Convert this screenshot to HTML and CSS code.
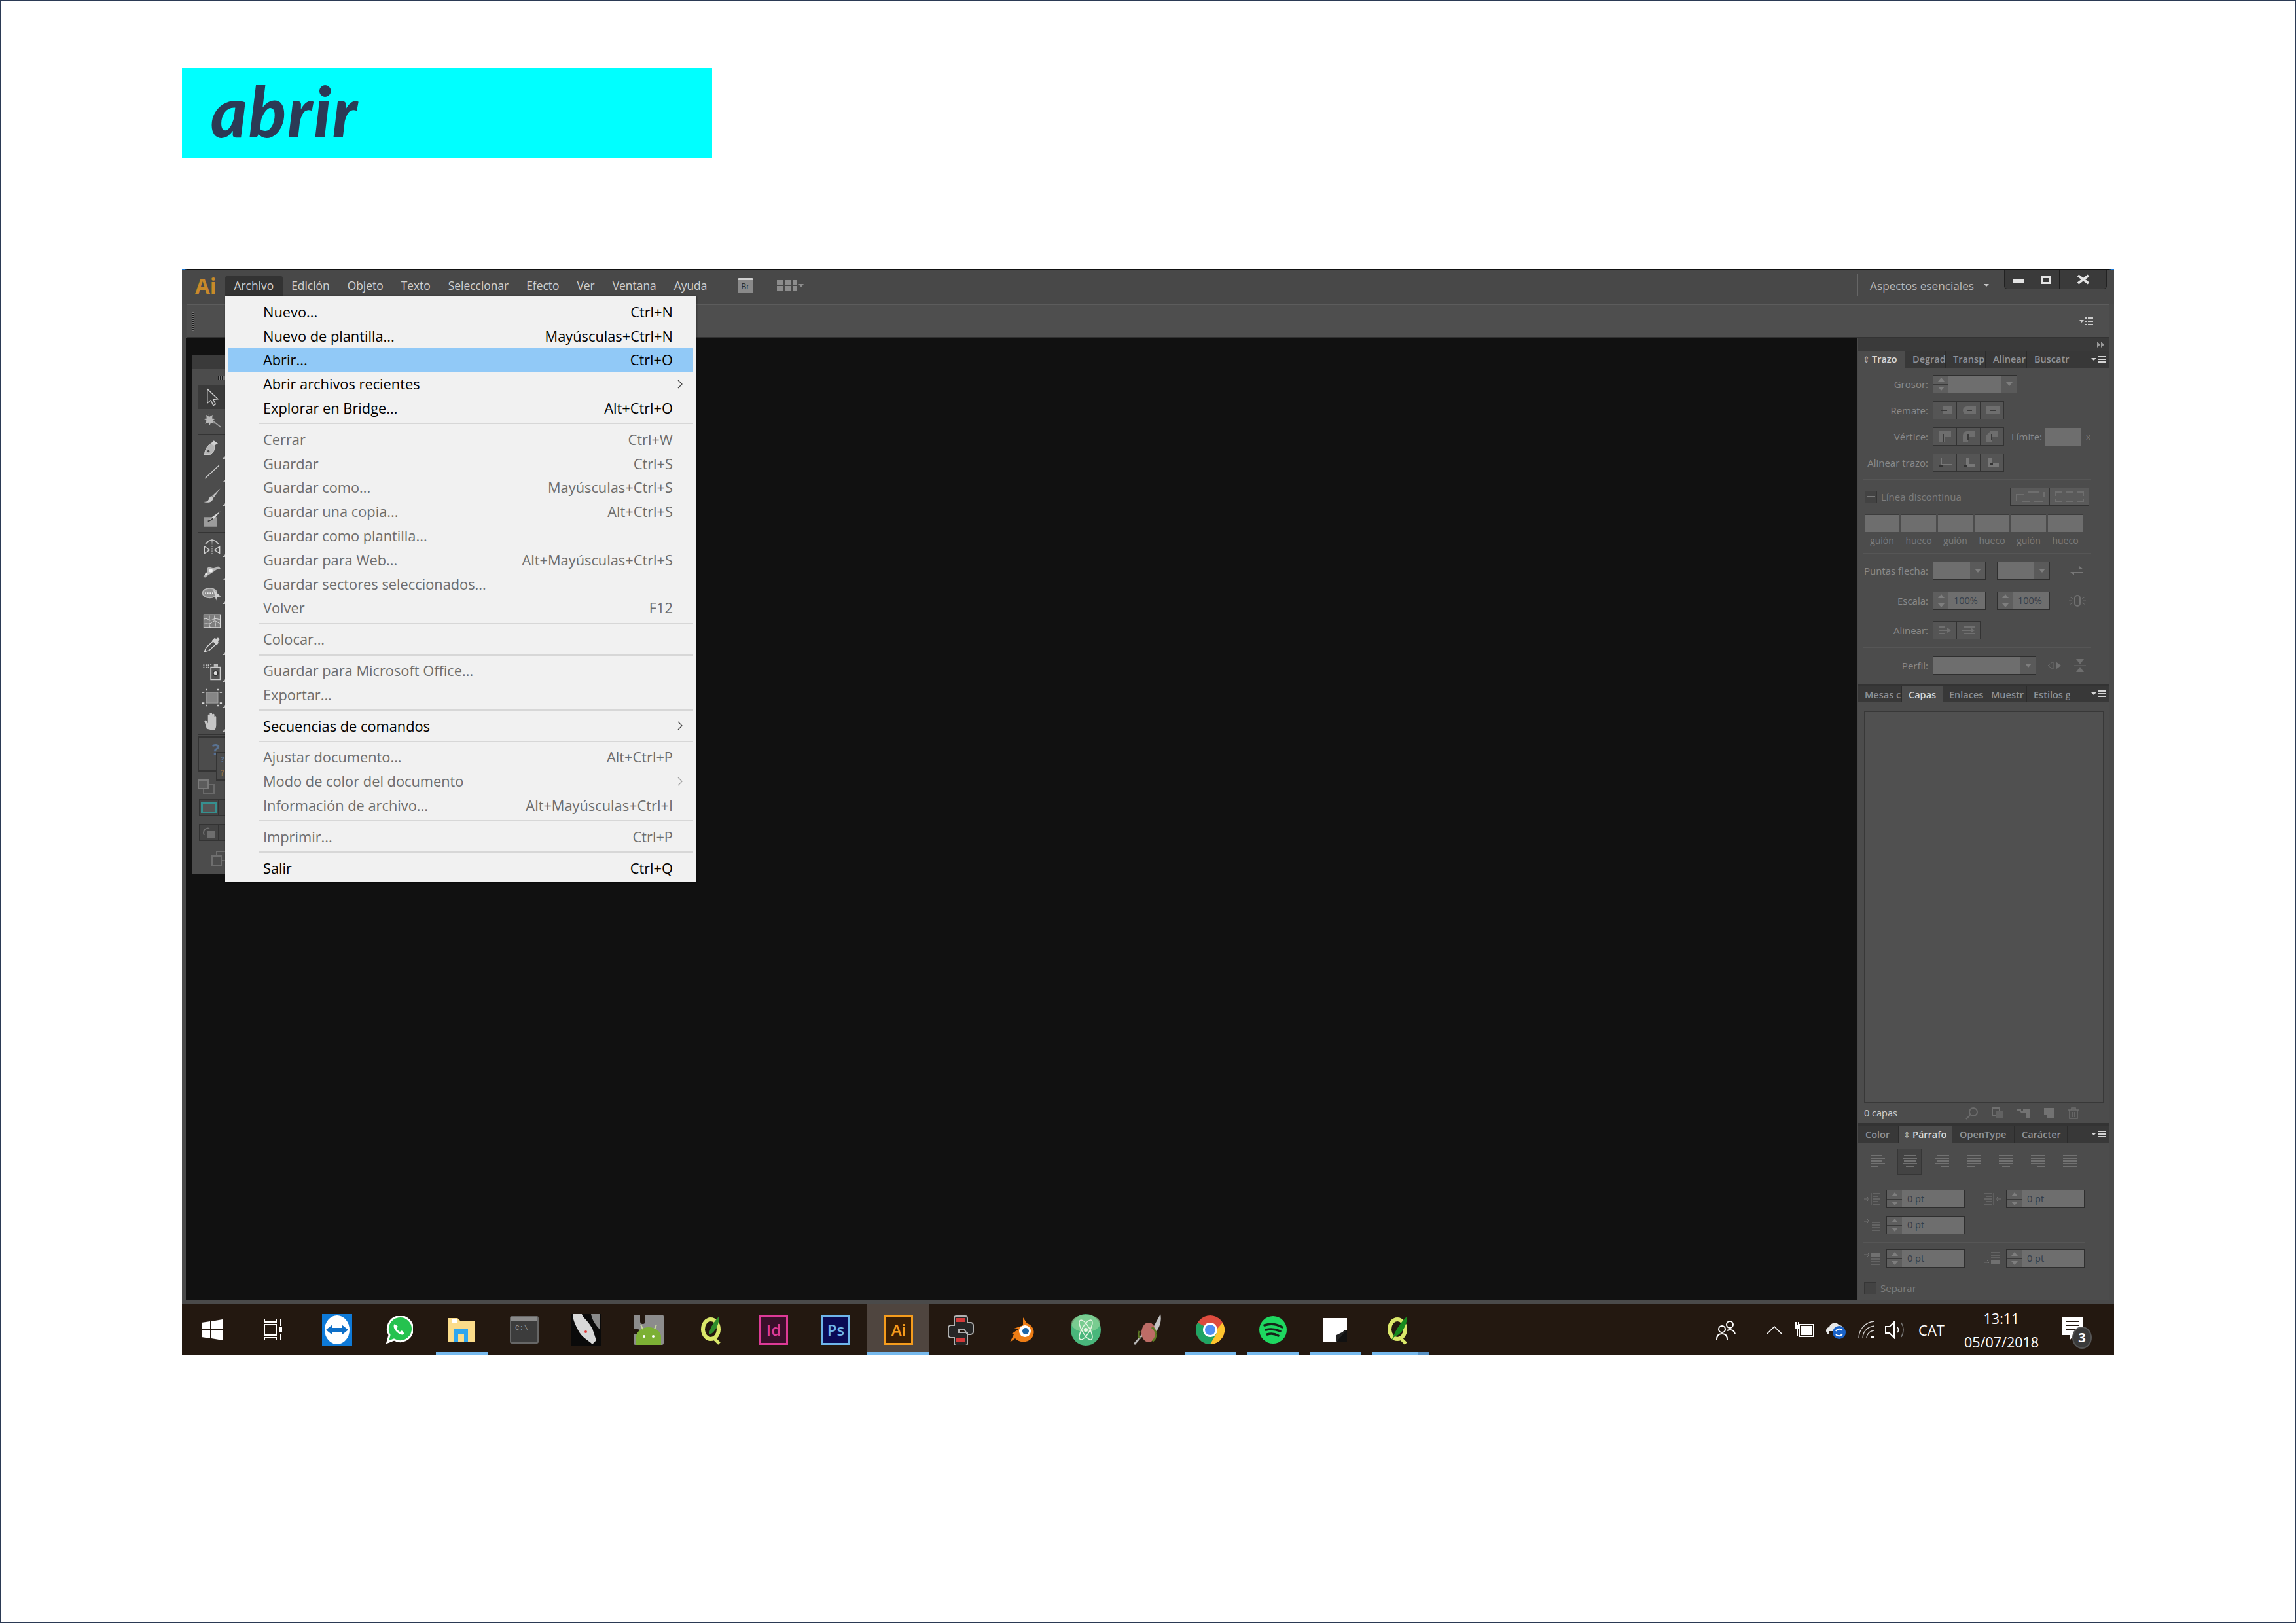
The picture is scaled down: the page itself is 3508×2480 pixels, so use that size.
FILE: index.html
```html
<!DOCTYPE html>
<html lang="es">
<head>
    <meta charset="UTF-8">
    <title>abrir</title>
    <link rel="stylesheet" href="styles.css">
</head>
<body>
<div class="page">
    <div class="banner"><span>abrir</span></div>

    <div class="shot">
        <div class="app">
            <!-- barra de titulo -->
            <div class="titlebar">
                <span class="ai-logo">Ai</span>
                <nav class="menubar">
                    <span class="mb mb-active">Archivo</span>
                    <span class="mb">Edición</span>
                    <span class="mb">Objeto</span>
                    <span class="mb">Texto</span>
                    <span class="mb">Seleccionar</span>
                    <span class="mb">Efecto</span>
                    <span class="mb">Ver</span>
                    <span class="mb">Ventana</span>
                    <span class="mb">Ayuda</span>
                </nav>
                <span class="title-sep"></span>
                <span class="br-icon">Br</span>
                <svg class="arrange-icon2" width="44" height="22" viewBox="0 0 44 22"><path d="M1 3h10v7H1zM13 3h10v7H13zM25 3h6v7h-6zM1 12h10v7H1zM13 12h10v7H13zM25 12h6v7h-6z" fill="#8c8c8c"/><path d="M34 9h8l-4 5z" fill="#8c8c8c"/></svg>
                <span class="title-sep sep-right"></span>
                <span class="workspace-name">Aspectos esenciales</span>
                <svg class="workspace-caret" width="10" height="6" viewBox="0 0 10 6"><path d="M1 1h8L5 5z" fill="#c8c8c8"/></svg>
                <div class="winctrl">
                    <span class="wc wc-min"><i></i></span>
                    <span class="wc wc-max"><i></i></span>
                    <span class="wc wc-close">
                        <svg width="22" height="16" viewBox="0 0 22 16"><path d="M3 2l16 12M19 2L3 14" stroke="#e4e4e4" stroke-width="4"/></svg>
                    </span>
                </div>
            </div>

            <!-- barra de control -->
            <div class="controlbar">
                <span class="grip"></span>
                <svg class="ctl-menu" width="22" height="14" viewBox="0 0 22 14"><path d="M0 5h7L3.500 9z" fill="#ccc"/><path d="M9 1h3v2H9zM9 6h3v2H9zM9 11h3v2H9zM13 1h8v2h-8zM13 6h8v2h-8zM13 11h8v2h-8z" fill="#ccc"/></svg>
            </div>

            <div class="workspace">
                <div class="canvas"></div>

                <aside class="dock">
                    <div class="dock-strip">
                        <svg width="12" height="9" viewBox="0 0 12 9"><path d="M0 0l5 4.500L0 9zM6 0l5 4.500L6 9z" fill="#9a9a9a"/></svg>
                    </div>

                    <div class="tabs tabs-stroke">
                        <span class="tab tab-on"><b class="updown">⇕</b>Trazo</span>
                        <span class="tab">Degrad</span>
                        <span class="tab">Transp</span>
                        <span class="tab">Alinear</span>
                        <span class="tab">Buscatr</span>
                        <span class="tab-fill"><svg width="22" height="13" viewBox="0 0 22 13"><path d="M0 4h8L4 8zM10 1h12v2H10zM10 5h12v2H10zM10 9h12v2H10z" fill="#d4d4d4"/></svg></span>
                    </div>
                    <div class="body body-stroke">
                        <div class="row">
                            <label>Grosor:</label>
                            <span class="field f129"><span class="spin"><i class="up"></i><i class="down"></i></span><span class="val"></span><span class="drop"><i class="down"></i></span></span>
                        </div>
                        <div class="row">
                            <label>Remate:</label>
                            <span class="seg">
                                <span class="sb"><svg width="22" height="14" viewBox="0 0 22 14"><path d="M8 1h14v12H8z" fill="#6e6e6e"/><path d="M4 6h10v2H4z" fill="#3a3a3a"/></svg></span>
                                <span class="sb"><svg width="22" height="14" viewBox="0 0 22 14"><path d="M8 1h14v12H8a6 6 0 0 1 0-12z" fill="#6e6e6e"/><path d="M8 6h8v2H8z" fill="#3a3a3a"/></svg></span>
                                <span class="sb"><svg width="22" height="14" viewBox="0 0 22 14"><path d="M1 1h21v12H1z" fill="#6e6e6e"/><path d="M8 6h8v2H8z" fill="#3a3a3a"/></svg></span>
                            </span>
                        </div>
                        <div class="row">
                            <label>Vértice:</label>
                            <span class="seg">
                                <span class="sb"><svg width="20" height="18" viewBox="0 0 20 18"><path d="M1 1h18v8H9v8H1z" fill="#6e6e6e"/><path d="M6 5h2v12H6z" fill="#3a3a3a"/></svg></span>
                                <span class="sb"><svg width="20" height="18" viewBox="0 0 20 18"><path d="M7 1h12v8H9v8H1V7a6 6 0 0 1 6-6z" fill="#6e6e6e"/><path d="M8 5h2v10H8z" fill="#3a3a3a"/></svg></span>
                                <span class="sb"><svg width="20" height="18" viewBox="0 0 20 18"><path d="M7 1h12v8H9v8H1V7z" fill="#6e6e6e"/><path d="M8 5h2v10H8z" fill="#3a3a3a"/></svg></span>
                            </span>
                            <span class="limit-label">Límite:</span>
                            <span class="limit-box"></span>
                            <span class="limit-x">x</span>
                        </div>
                        <div class="row">
                            <label>Alinear trazo:</label>
                            <span class="seg">
                                <span class="sb"><svg width="20" height="16" viewBox="0 0 20 16"><path d="M3 1h2v9h15v2H3z" fill="#777"/><path d="M1 11h6v4H1z" fill="#333"/></svg></span>
                                <span class="sb"><svg width="20" height="16" viewBox="0 0 20 16"><path d="M6 1h5v9h9v5H6z" fill="#777"/><path d="M3 11h5v4H3z" fill="#333"/></svg></span>
                                <span class="sb"><svg width="20" height="16" viewBox="0 0 20 16"><path d="M3 1h7v8h10v6H3z" fill="#777"/><path d="M6 8h5v4H6z" fill="#333"/></svg></span>
                            </span>
                        </div>
                        <div class="rule rule-a"></div>
                        <div class="row-dash">
                            <span class="check"><i></i></span>
                            <span class="dash-title">Línea discontinua</span>
                            <span class="seg seg-dash">
                                <span class="sb sb-60"><svg width="46" height="18" viewBox="0 0 46 18"><path d="M2 16V6h12M20 2h16M44 2v8M10 16h12M28 16h14" fill="none" stroke="#6e6e6e" stroke-width="2"/></svg></span>
                                <span class="sb sb-60"><svg width="46" height="18" viewBox="0 0 46 18"><path d="M2 8V2h10M18 2h10M34 2h10v6M2 12v4h10M18 16h10M34 16h10v-4" fill="none" stroke="#6e6e6e" stroke-width="2"/></svg></span>
                            </span>
                        </div>
                        <div class="dash-boxes">
                            <span></span><span></span><span></span><span></span><span></span><span></span>
                        </div>
                        <div class="dash-labels">
                            <span>guión</span><span>hueco</span><span>guión</span><span>hueco</span><span>guión</span><span>hueco</span>
                        </div>
                        <div class="rule rule-b"></div>
                        <div class="row mt6">
                            <label>Puntas flecha:</label>
                            <span class="field f81"><span class="val"></span><span class="drop"><i class="down small"></i></span></span>
                            <span class="field f81 ml17"><span class="val"></span><span class="drop"><i class="down small"></i></span></span>
                            <svg class="side-ico" width="24" height="18" viewBox="0 0 24 18"><path d="M2 6h14V2l6 5h-20M22 12H8v4l-6-5h20" fill="#777"/></svg>
                        </div>
                        <div class="row mt6">
                            <label>Escala:</label>
                            <span class="field f81"><span class="spin"><i class="up"></i><i class="down"></i></span><span class="val val-txt">100%</span></span>
                            <span class="field f81 ml17"><span class="spin"><i class="up"></i><i class="down"></i></span><span class="val val-txt">100%</span></span>
                            <svg class="side-ico" width="26" height="20" viewBox="0 0 26 20"><rect x="9" y="2" width="8" height="16" rx="4" fill="none" stroke="#707070" stroke-width="2"/><path d="M1 4l5 3M1 16l5-3M25 4l-5 3M25 16l-5-3M0 10h5M21 10h5" stroke="#6a6a6a"/></svg>
                        </div>
                        <div class="row mt5">
                            <label>Alinear:</label>
                            <span class="seg">
                                <span class="sb"><svg width="20" height="14" viewBox="0 0 20 14"><path d="M0 1h10v2H0zM0 11h10v2H0zM0 6h13V3l6 4-6 4V8H0z" fill="#707070"/></svg></span>
                                <span class="sb"><svg width="20" height="14" viewBox="0 0 20 14"><path d="M2 1h17v2H2zM2 11h17v2H2zM0 6h13V3l6 4-6 4V8H0z" fill="#707070"/></svg></span>
                            </span>
                        </div>
                        <div class="rule rule-c"></div>
                        <div class="row mt7">
                            <label>Perfil:</label>
                            <span class="field f158"><span class="val"></span><span class="drop"><i class="down"></i></span></span>
                            <svg class="flip-a" width="22" height="18" viewBox="0 0 22 18"><path d="M9 3v12L1 9z" fill="none" stroke="#6e6e6e"/><path d="M13 3v12l8-6z" fill="#707070"/></svg>
                            <svg class="flip-b" width="18" height="22" viewBox="0 0 18 22"><path d="M3 1h12l-6 8zM3 21h12l-6-8z" fill="#6e6e6e"/><path d="M0 11h18" stroke="#6e6e6e"/></svg>
                        </div>
                    </div>

                    <div class="tabs tabs-layers">
                        <span class="tab">Mesas c</span>
                        <span class="tab tab-on">Capas</span>
                        <span class="tab">Enlaces</span>
                        <span class="tab">Muestr</span>
                        <span class="tab">Estilos g</span>
                        <span class="tab-fill"><svg width="22" height="13" viewBox="0 0 22 13"><path d="M0 4h8L4 8zM10 1h12v2H10zM10 5h12v2H10zM10 9h12v2H10z" fill="#d4d4d4"/></svg></span>
                    </div>
                    <div class="body body-layers">
                        <div class="layer-list"></div>
                        <div class="layer-foot">
                            <span class="layer-count">0 capas</span>
                            <svg class="lf-ico" width="20" height="20" viewBox="0 0 20 20"><circle cx="12" cy="8" r="6" fill="none" stroke="#6c6c6c" stroke-width="2"/><path d="M7 13l-6 6" stroke="#6c6c6c" stroke-width="2"/></svg>
                            <svg class="lf-ico" width="18" height="18" viewBox="0 0 18 18"><rect x="1" y="1" width="11" height="11" fill="none" stroke="#707070" stroke-width="2"/><rect x="6" y="6" width="11" height="11" fill="#626262"/></svg>
                            <svg class="lf-ico" width="22" height="16" viewBox="0 0 22 16"><path d="M1 1h6v3h3v3H7L4 4H1zM10 1h11v14h-6V8h-5z" fill="#727272"/></svg>
                            <svg class="lf-ico" width="16" height="16" viewBox="0 0 16 16"><path d="M0 0h16v16H5v-5H0z" fill="#727272"/></svg>
                            <svg class="lf-ico" width="18" height="18" viewBox="0 0 18 18"><path d="M1 4h16M6 4V1h6v3M3 4v13h12V4M7 7v8M11 7v8" fill="none" stroke="#6e6e6e" stroke-width="1.500"/></svg>
                        </div>
                    </div>

                    <div class="tabs tabs-para">
                        <span class="tab">Color</span>
                        <span class="tab tab-on"><b class="updown">⇕</b>Párrafo</span>
                        <span class="tab">OpenType</span>
                        <span class="tab">Carácter</span>
                        <span class="tab-fill"><svg width="22" height="13" viewBox="0 0 22 13"><path d="M0 4h8L4 8zM10 1h12v2H10zM10 5h12v2H10zM10 9h12v2H10z" fill="#d4d4d4"/></svg></span>
                    </div>
                    <div class="body body-para">
                        <div class="aligns">
                            <span class="al"><svg width="22" height="20" viewBox="0 0 22 20"><path d="M0 1h18M0 5h22M0 9h18M0 13h22M0 17h12" stroke="#727272" stroke-width="2"/></svg></span>
                            <span class="al al-on"><svg width="22" height="20" viewBox="0 0 22 20"><path d="M2 1h18M0 5h22M2 9h18M0 13h22M5 17h12" stroke="#727272" stroke-width="2"/></svg></span>
                            <span class="al"><svg width="22" height="20" viewBox="0 0 22 20"><path d="M4 1h18M0 5h22M4 9h18M0 13h22M10 17h12" stroke="#727272" stroke-width="2"/></svg></span>
                            <span class="al"><svg width="22" height="20" viewBox="0 0 22 20"><path d="M0 1h22M0 5h22M0 9h22M0 13h22M0 17h12" stroke="#727272" stroke-width="2"/></svg></span>
                            <span class="al"><svg width="22" height="20" viewBox="0 0 22 20"><path d="M0 1h22M0 5h22M0 9h22M0 13h22M5 17h12" stroke="#727272" stroke-width="2"/></svg></span>
                            <span class="al"><svg width="22" height="20" viewBox="0 0 22 20"><path d="M0 1h22M0 5h22M0 9h22M0 13h22M10 17h12" stroke="#727272" stroke-width="2"/></svg></span>
                            <span class="al"><svg width="22" height="20" viewBox="0 0 22 20"><path d="M0 1h22M0 5h22M0 9h22M0 13h22M0 17h22" stroke="#727272" stroke-width="2"/></svg></span>
                        </div>
                        <div class="rule rule-p1"></div>
                        <div class="pt-row pt-first">
                            <svg class="pt-ico" width="26" height="20" viewBox="0 0 26 20"><path d="M0 10h7M5 7l3 3-3 3M11 1v18" stroke="#707070" fill="none"/><path d="M14 2h11M14 6h8M14 10h11M14 14h8M14 18h11" stroke="#6c6c6c" stroke-width="1.500"/></svg>
                            <span class="pt"><span class="spin"><i class="up"></i><i class="down"></i></span><span class="val val-txt">0 pt</span></span>
                            <svg class="pt-ico pt-ico-r" width="26" height="20" viewBox="0 0 26 20"><path d="M26 10h-7M21 7l-3 3 3 3M15 1v18" stroke="#707070" fill="none"/><path d="M1 2h11M4 6h8M1 10h11M4 14h8M1 18h11" stroke="#6c6c6c" stroke-width="1.500"/></svg>
                            <span class="pt pt-r"><span class="spin"><i class="up"></i><i class="down"></i></span><span class="val val-txt">0 pt</span></span>
                        </div>
                        <div class="pt-row pt-second">
                            <svg class="pt-ico" width="26" height="20" viewBox="0 0 26 20"><path d="M0 4h7M5 1l3 3-3 3" stroke="#707070" fill="none"/><path d="M12 6h12M12 10h12M12 14h12M12 18h12" stroke="#6c6c6c" stroke-width="1.500"/></svg>
                            <span class="pt"><span class="spin"><i class="up"></i><i class="down"></i></span><span class="val val-txt">0 pt</span></span>
                        </div>
                        <div class="rule rule-p2"></div>
                        <div class="pt-row pt-third">
                            <svg class="pt-ico" width="26" height="20" viewBox="0 0 26 20"><path d="M0 4h7M5 1l3 3-3 3" stroke="#707070" fill="none"/><rect x="11" y="1" width="14" height="6" fill="#707070"/><path d="M11 11h14M11 15h14M11 19h14" stroke="#6c6c6c" stroke-width="1.500"/></svg>
                            <span class="pt"><span class="spin"><i class="up"></i><i class="down"></i></span><span class="val val-txt">0 pt</span></span>
                            <svg class="pt-ico pt-ico-r" width="26" height="22" viewBox="0 0 26 22"><path d="M0 17h7M5 14l3 3-3 3" stroke="#707070" fill="none"/><path d="M11 2h14M11 6h14M11 10h14" stroke="#6c6c6c" stroke-width="1.500"/><rect x="11" y="14" width="14" height="6" fill="#707070"/></svg>
                            <span class="pt pt-r"><span class="spin"><i class="up"></i><i class="down"></i></span><span class="val val-txt">0 pt</span></span>
                        </div>
                        <div class="rule rule-p3"></div>
                        <div class="sep-row"><span class="check"></span><span class="dash-title">Separar</span></div>
                    </div>
                </aside>
            </div>

            <!-- panel de herramientas, flota sobre el lienzo -->
            <div class="toolbox">
                <div class="tb-head"></div>
                <div class="tb-grip"><span></span></div>
                <div class="tool tool-on"><svg width="26" height="32" viewBox="0 0 26 32"><path d="M5 2v24l6-5 4 9 4-2-4-8 8-1z" fill="#3d3d3d" stroke="#cfcfcf" stroke-width="1.500"/></svg></div>
                <div class="tool"><svg width="34" height="26" viewBox="0 0 34 26"><path d="M11 2l2 4 5-3-1 6 6 1-5 3 3 5-6-2-2 5-2-5-6 2 3-5-6-3 6-1-1-6 5 3z" fill="#b8b8b8"/><path d="M18 13l14 11" stroke="#a0a0a0" stroke-width="2"/></svg></div>
                <div class="tool-sep"></div>
                <div class="tool"><svg width="32" height="30" viewBox="0 0 32 30"><path d="M3 26c1-8 4-15 11-19l6 3c2 6-2 13-8 16z" fill="#b4b4b4" stroke="#d8d8d8"/><path d="M14 7l5-5 7 5-6 3z" fill="#d0d0d0"/><circle cx="10" cy="20" r="2" fill="#444"/></svg><i class="corner"></i></div>
                <div class="tool"><svg width="30" height="26" viewBox="0 0 30 26"><path d="M3 24L27 2" stroke="#cfcfcf" stroke-width="1.500"/></svg><i class="corner"></i></div>
                <div class="tool"><svg width="32" height="28" viewBox="0 0 32 28"><path d="M30 2L16 15l3 3z" fill="#bdbdbd"/><path d="M15 15c-4 1-4 6-6 8-1 2-4 2-7 2 6 2 15 2 16-7z" fill="#c8c8c8"/></svg><i class="corner"></i></div>
                <div class="tool"><svg width="32" height="28" viewBox="0 0 32 28"><path d="M2 11h22v16H2z" fill="#9c9c9c"/><path d="M30 1L17 10l-7 7 6-1 6-5z" fill="#d8d8d8"/><path d="M9 18c4-2 7-2 9-6" stroke="#3a3a3a" stroke-width="2" fill="none"/></svg></div>
                <div class="tool-sep"></div>
                <div class="tool"><svg width="30" height="28" viewBox="0 0 30 28"><path d="M2 14v12l9-6zM28 14v12l-9-6z" fill="none" stroke="#d0d0d0" stroke-width="1.500"/><path d="M4 10c5-9 17-9 22 0" fill="none" stroke="#c0c0c0" stroke-width="2"/><path d="M15 1v27" stroke="#d8d8d8" stroke-dasharray="2 2"/></svg><i class="corner"></i></div>
                <div class="tool"><svg width="34" height="26" viewBox="0 0 34 26"><path d="M2 24c4-3 5-6 7-9-1-4 1-7 3-8 4 3 9 4 15 0 3 1 4 3 5 5-5-1-8 0-11 3-4 3-10 6-16 11z" fill="#b4b4b4"/><circle cx="15" cy="14" r="3" fill="#eee"/><circle cx="7" cy="20" r="2" fill="#eee"/></svg><i class="corner"></i></div>
                <div class="tool"><svg width="36" height="26" viewBox="0 0 36 26"><ellipse cx="14" cy="12" rx="12" ry="8" fill="#8e8e8e" stroke="#b8b8b8" stroke-width="2"/><path d="M6 12h16" stroke="#eee" stroke-width="2" stroke-dasharray="2 2"/><path d="M20 6l13 12-7 1-1 6z" fill="#cfcfcf"/></svg><i class="corner"></i></div>
                <div class="tool-sep"></div>
                <div class="tool"><svg width="30" height="24" viewBox="0 0 30 24"><rect x="1" y="1" width="28" height="22" fill="#7e7e7e" stroke="#d8d8d8" stroke-width="1.500"/><path d="M1 9c6-4 8 4 14 1s8-2 14 0M1 17c6-2 8 2 14-3s8 0 14 3M10 1c2 7-2 14 2 22M20 1c-3 8 3 14 0 22" fill="none" stroke="#e4e4e4"/></svg></div>
                <div class="tool"><svg width="30" height="28" viewBox="0 0 30 28"><path d="M2 26l3-7L17 8l5 5L10 24z" fill="none" stroke="#d8d8d8" stroke-width="1.500"/><path d="M15 7l8 8 3-4-1-3 3-3-3-3-3 2-3-1z" fill="#cfcfcf"/></svg><i class="corner"></i></div>
                <div class="tool-sep tool-sep-5"></div>
                <div class="tool"><svg width="32" height="30" viewBox="0 0 32 30"><path d="M1 4h2M5 4h2M9 4h2M1 8h2M5 8h2M9 8h2M13 3h2" stroke="#c8c8c8" stroke-width="2"/><rect x="19" y="2" width="7" height="5" fill="#bbb"/><rect x="14" y="8" width="16" height="21" fill="#555" stroke="#ccc" stroke-width="2"/><circle cx="22" cy="18" r="4" fill="#ddd" stroke="#333" stroke-width="2"/></svg><i class="corner"></i></div>
                <div class="tool-sep tool-sep-4"></div>
                <div class="tool"><svg width="34" height="30" viewBox="0 0 34 30"><rect x="7" y="6" width="20" height="18" fill="#868686" stroke="#aaa"/><path d="M0 6h4M30 6h4M0 24h4M30 24h4M7 0v3M27 0v3M7 27v3M27 27v3" stroke="#ddd" stroke-width="2"/></svg><i class="corner"></i></div>
                <div class="tool"><svg width="28" height="30" viewBox="0 0 28 30"><path d="M5 28L1 15c0-2 3-2 4 0l2 4V5c0-2 3-2 3 0v8-11c0-2 4-2 4 0v11-9c0-2 4-2 4 0v10-6c0-2 3-2 3 0v13c0 6-2 8-3 10z" fill="#c6c6c6"/></svg><i class="corner"></i></div>
                <div class="tool-sep tool-sep-5"></div>
                <div class="colors">
                    <span class="q-big">?</span>
                    <span class="q-box"><span>?</span><span class="q-low">?</span></span>
                </div>
                <div class="swap"><svg width="26" height="22" viewBox="0 0 26 22"><rect x="1" y="1" width="15" height="13" fill="#5c5c5c" stroke="#7a7a7a" stroke-width="2"/><path d="M9 14v7h16V8h-8" fill="none" stroke="#6a6a6a" stroke-width="2"/></svg></div>
                <div class="modes"><span class="mode mode-on"><i></i></span><span class="mode"></span></div>
                <div class="modes modes-b"><span class="mode"><svg width="22" height="20" viewBox="0 0 22 20"><path d="M4 14C1 8 6 2 12 4" fill="none" stroke="#6e6e6e" stroke-width="2"/><rect x="9" y="8" width="12" height="10" fill="#6e6e6e"/></svg></span><span class="mode"></span></div>
                <div class="tb-last"><svg width="26" height="24" viewBox="0 0 26 24"><path d="M1 8h14v15H1zM8 8V1h16v14h-9" fill="none" stroke="#6e6e6e" stroke-width="2"/></svg></div>
            </div>

            <!-- menu Archivo desplegado -->
            <div class="menu">
                <div class="mi"><span>Nuevo...</span><kbd>Ctrl+N</kbd></div>
                <div class="mi"><span>Nuevo de plantilla...</span><kbd>Mayúsculas+Ctrl+N</kbd></div>
                <div class="mi mi-hot"><span>Abrir...</span><kbd>Ctrl+O</kbd></div>
                <div class="mi mi-sub"><span>Abrir archivos recientes</span><svg width="8" height="14" viewBox="0 0 8 14"><path d="M1 1l6 6-6 6" fill="none" stroke="#444" stroke-width="1.300"/></svg></div>
                <div class="mi"><span>Explorar en Bridge...</span><kbd>Alt+Ctrl+O</kbd></div>
                <div class="msep"></div>
                <div class="mi off"><span>Cerrar</span><kbd>Ctrl+W</kbd></div>
                <div class="mi off"><span>Guardar</span><kbd>Ctrl+S</kbd></div>
                <div class="mi off"><span>Guardar como...</span><kbd>Mayúsculas+Ctrl+S</kbd></div>
                <div class="mi off"><span>Guardar una copia...</span><kbd>Alt+Ctrl+S</kbd></div>
                <div class="mi off"><span>Guardar como plantilla...</span></div>
                <div class="mi off"><span>Guardar para Web...</span><kbd>Alt+Mayúsculas+Ctrl+S</kbd></div>
                <div class="mi off"><span>Guardar sectores seleccionados...</span></div>
                <div class="mi off"><span>Volver</span><kbd>F12</kbd></div>
                <div class="msep"></div>
                <div class="mi off"><span>Colocar...</span></div>
                <div class="msep"></div>
                <div class="mi off"><span>Guardar para Microsoft Office...</span></div>
                <div class="mi off"><span>Exportar...</span></div>
                <div class="msep"></div>
                <div class="mi mi-sub"><span>Secuencias de comandos</span><svg width="8" height="14" viewBox="0 0 8 14"><path d="M1 1l6 6-6 6" fill="none" stroke="#444" stroke-width="1.300"/></svg></div>
                <div class="msep"></div>
                <div class="mi off"><span>Ajustar documento...</span><kbd>Alt+Ctrl+P</kbd></div>
                <div class="mi off mi-sub"><span>Modo de color del documento</span><svg width="8" height="14" viewBox="0 0 8 14"><path d="M1 1l6 6-6 6" fill="none" stroke="#a0a0a0" stroke-width="1.300"/></svg></div>
                <div class="mi off"><span>Información de archivo...</span><kbd>Alt+Mayúsculas+Ctrl+I</kbd></div>
                <div class="msep"></div>
                <div class="mi off"><span>Imprimir...</span><kbd>Ctrl+P</kbd></div>
                <div class="msep"></div>
                <div class="mi"><span>Salir</span><kbd>Ctrl+Q</kbd></div>
            </div>
        </div>

        <!-- barra de tareas de Windows -->
        <div class="taskbar">
            <span class="tk tk-sys"><svg width="32" height="32" viewBox="0 0 32 32"><path d="M0 5l13-2v12H0zM15 3l17-3v15H15zM0 17h13v12L0 27zM15 17h17v15l-17-3z" fill="#fff"/></svg></span>
            <span class="tk tk-sys"><svg width="32" height="32" viewBox="0 0 32 32"><path d="M4 0v4h18V0M4 32v-4h18v4M4 8h18v16H4z" fill="none" stroke="#fff" stroke-width="2"/><path d="M29 0v10M29 22v10" stroke="#fff" stroke-width="2"/><rect x="27" y="12" width="4" height="8" fill="#fff"/></svg></span>
            <span class="tk"><svg width="46" height="48" viewBox="0 0 46 48"><rect width="46" height="48" fill="#0e7ad8"/><ellipse cx="23" cy="24" rx="19" ry="22" fill="#fff"/><path d="M6 24l10-8v5h14v-5l10 8-10 8v-5H16v5z" fill="#0e6fc8"/></svg></span>
            <span class="tk"><svg width="42" height="42" viewBox="0 0 42 42"><path d="M3 40l3-11a19 19 0 1 1 7 7z" fill="#25c24f" stroke="#fff" stroke-width="3"/><path d="M14 12c-3 3-1 8 3 12s9 6 12 3l-4-5-3 2c-2-1-4-3-5-5l2-3z" fill="#fff"/></svg></span>
            <span class="tk tk-on"><svg width="44" height="44" viewBox="0 0 44 44"><path d="M2 4h14l4 4h22v32H2z" fill="#fbdc8a"/><rect x="8" y="6" width="8" height="5" fill="#fff"/><path d="M10 40V20h22v20h-6V28H17v12z" fill="#2ea6ee"/></svg></span>
            <span class="tk"><svg width="44" height="44" viewBox="0 0 44 44"><rect x="1" y="2" width="42" height="40" rx="2" fill="#3c3c3c" stroke="#666" stroke-width="2"/><rect x="2" y="3" width="40" height="5" fill="#8a8a8a"/><text x="8" y="22" class="cmd-txt">C:\_</text></svg></span>
            <span class="tk"><svg width="46" height="48" viewBox="0 0 46 48"><rect width="46" height="48" fill="#0a0a0a"/><path d="M2 0h14c2 6 8 8 16 22l6 18-6 6c-6-6-16-10-22-22C6 16 2 8 2 0z" fill="#d8d8d8"/><path d="M30 0h14v24c-6-6-12-14-14-24z" fill="#8a8a8a"/><circle cx="22" cy="27" r="2" fill="#e23b3b"/></svg></span>
            <span class="tk"><svg width="46" height="46" viewBox="0 0 46 46"><rect width="46" height="46" rx="3" fill="#8c8c8c"/><path d="M10 0h8v10a4 4 0 0 1-8 0zM0 22h6a4 4 0 0 1 0 8H0z" fill="#231810"/><path d="M4 46V34a19 15 0 0 1 38 0v12z" fill="#7cb034"/><path d="M14 22l-3-7M32 22l3-7" stroke="#c8d8a0" stroke-width="2"/><circle cx="16" cy="33" r="2" fill="#fff"/><circle cx="30" cy="33" r="2" fill="#fff"/></svg></span>
            <span class="tk"><svg width="36" height="46" viewBox="0 0 36 46"><ellipse cx="17" cy="22" rx="12" ry="15" fill="none" stroke="#dbe86a" stroke-width="6"/><path d="M20 34l10 10" stroke="#dbe86a" stroke-width="5"/><path d="M14 30C16 18 24 8 30 2c0 12-6 24-14 28" fill="#2f8c2b"/></svg></span>
            <span class="tk"><svg width="44" height="46" viewBox="0 0 44 46"><rect x="1.500" y="1.500" width="41" height="43" fill="#3a0f2a" stroke="#dd3a96" stroke-width="3"/><text x="22" y="32" class="box-txt id-txt">Id</text></svg></span>
            <span class="tk"><svg width="44" height="46" viewBox="0 0 44 46"><rect x="1.500" y="1.500" width="41" height="43" fill="#0a0a55" stroke="#6eb5ea" stroke-width="3"/><text x="22" y="32" class="box-txt ps-txt">Ps</text></svg></span>
            <span class="tk tk-on tk-current"><svg width="44" height="46" viewBox="0 0 44 46"><rect x="1.500" y="1.500" width="41" height="43" fill="#3a1f05" stroke="#f59c1d" stroke-width="3"/><text x="22" y="32" class="box-txt ai-txt">Ai</text></svg></span>
            <span class="tk"><svg width="40" height="46" viewBox="0 0 40 46"><path d="M13 2h14a3 3 0 0 1 3 3v7h5a4 4 0 0 1 4 4v10a4 4 0 0 1-4 4h-5l-5-8h-8v5h13v17a3 3 0 0 1-3 3H13a3 3 0 0 1-3-3v-9H5a4 4 0 0 1-4-4V20a4 4 0 0 1 4-4h5V5a3 3 0 0 1 3-3z" fill="#262626" stroke="#b0b0b0" stroke-width="2"/><rect x="13" y="5" width="14" height="6" fill="#d23a3a"/><rect x="13" y="36" width="14" height="6" fill="#d23a3a"/></svg></span>
            <span class="tk"><svg width="44" height="42" viewBox="0 0 44 42"><path d="M22 2l6 9c9 3 13 12 9 20-5 10-20 11-27 3l-8 6 6-12-3-1 10-7-9 0 16-6z" fill="#ee7d15"/><circle cx="25" cy="23" r="9" fill="#fff"/><circle cx="26" cy="23" r="5" fill="#1d65a8"/></svg></span>
            <span class="tk"><svg width="46" height="48" viewBox="0 0 46 48"><ellipse cx="23" cy="24" rx="23" ry="24" fill="#49b67b"/><ellipse cx="23" cy="14" rx="22" ry="13" fill="#8ed69a" opacity=".7"/><g fill="none" stroke="#e8f5e4" stroke-width="1.500"><ellipse cx="23" cy="24" rx="6" ry="17" transform="rotate(30 23 24)"/><ellipse cx="23" cy="24" rx="6" ry="17" transform="rotate(-30 23 24)"/></g><circle cx="23" cy="24" r="3" fill="#e8f5e4"/></svg></span>
            <span class="tk"><svg width="46" height="48" viewBox="0 0 46 48"><path d="M2 46l14-16" stroke="#b8b8b8" stroke-width="3"/><path d="M30 22L42 0c2 8 0 20-8 28z" fill="#c4c4c4"/><ellipse cx="24" cy="28" rx="11" ry="15" fill="#bd6c66"/><circle cx="22" cy="31" r="13" fill="none" stroke="#5d7a25" stroke-width="3" stroke-dasharray="12 22"/></svg></span>
            <span class="tk tk-on"><svg width="44" height="44" viewBox="0 0 44 44"><circle cx="22" cy="22" r="22" fill="#dd4b3e"/><path d="M22 22L41 33a22 22 0 0 1-19 11z" fill="#fdc42d"/><path d="M41 11a22 22 0 0 1 0 22L22 33z" fill="#fdc42d"/><path d="M3 11a22 22 0 0 0 19 33l10-17z" fill="#1fa463"/><circle cx="22" cy="22" r="11" fill="#fff"/><circle cx="22" cy="22" r="8" fill="#4f8ef0"/></svg></span>
            <span class="tk tk-on"><svg width="42" height="42" viewBox="0 0 42 42"><circle cx="21" cy="21" r="21" fill="#1ed760"/><path d="M8 14c9-3 18-2 27 3M10 21c7-2 15-1 22 2M12 28c6-2 12-1 17 2" fill="none" stroke="#16261a" stroke-width="3.500" stroke-linecap="round"/></svg></span>
            <span class="tk tk-on"><svg width="36" height="36" viewBox="0 0 36 36"><rect width="36" height="36" fill="#fff"/><path d="M20 36h16V18h-4z" fill="#111"/><path d="M20 36V26l16-8z" fill="#222"/></svg></span>
            <span class="tk tk-on tk-stack"><svg width="36" height="46" viewBox="0 0 36 46"><ellipse cx="17" cy="22" rx="12" ry="15" fill="none" stroke="#dbe86a" stroke-width="6"/><path d="M20 34l10 10" stroke="#dbe86a" stroke-width="5"/><path d="M8 40C14 22 24 10 32 2c0 14-8 28-20 32" fill="#178a1e"/></svg></span>

            <div class="tray">
                <span class="ty ty-people"><svg width="32" height="32" viewBox="0 0 32 32"><circle cx="22" cy="8" r="5" fill="none" stroke="#fff" stroke-width="2"/><circle cx="10" cy="15" r="5" fill="none" stroke="#fff" stroke-width="2"/><path d="M2 31c0-6 3-9 8-9s8 3 8 9M18 17c2-1 3-1 4-1 4 0 7 2 8 6" fill="none" stroke="#fff" stroke-width="2"/></svg></span>
                <span class="ty ty-caret"><svg width="24" height="14" viewBox="0 0 24 14"><path d="M1 13L12 2l11 11" fill="none" stroke="#fff" stroke-width="1.500"/></svg></span>
                <span class="ty ty-plug"><svg width="30" height="24" viewBox="0 0 30 24"><rect x="7" y="4" width="22" height="18" fill="none" stroke="#fff" stroke-width="2"/><rect x="9" y="6" width="18" height="14" fill="#fff"/><path d="M2 0v5M6 0v5" stroke="#fff" stroke-width="2"/><path d="M1 5h6v5H5v12H3V10H1z" fill="#fff"/></svg></span>
                <span class="ty ty-cloud"><svg width="34" height="30" viewBox="0 0 34 30"><path d="M6 22C0 20 1 11 7 11c1-7 11-9 15-3 5 0 8 4 7 9H6z" fill="#e8e8e8"/><circle cx="22" cy="19" r="10" fill="#1a63c9"/><path d="M17 17a6 6 0 0 1 10-1M27 21a6 6 0 0 1-10 1" fill="none" stroke="#fff" stroke-width="2"/></svg></span>
                <span class="ty ty-wifi"><svg width="28" height="28" viewBox="0 0 28 28"><g fill="none" stroke="#fff" stroke-width="1.300" opacity=".8"><path d="M2 27C2 13 12 2 26 1"/><path d="M8 27c0-10 7-18 18-19"/><path d="M14 27c0-6 4-11 11-12"/></g><rect x="21" y="23" width="4" height="4" fill="#fff"/></svg></span>
                <span class="ty ty-speaker"><svg width="32" height="28" viewBox="0 0 32 28"><path d="M2 9h6l7-7v24l-7-7H2z" fill="none" stroke="#fff" stroke-width="2"/><path d="M20 10c2 2 2 6 0 8" fill="none" stroke="#fff" stroke-width="1.500"/><path d="M26 3c4 7 4 15 0 22" fill="none" stroke="#7a7a7a" stroke-width="1.500"/></svg></span>
                <span class="ty-lang">CAT</span>
                <span class="ty-clock"><span>13:11</span><span>05/07/2018</span></span>
                <span class="ty ty-notif">
                    <svg width="32" height="40" viewBox="0 0 32 40"><path d="M0 0h32v28H18l-7 8v-8H0z" fill="#fff"/><path d="M6 7h20M6 13h20M6 19h14" stroke="#231810" stroke-width="2"/></svg>
                    <b class="notif-badge">3</b>
                </span>
                <span class="ty-end"></span>
            </div>
        </div>
    </div>
</div>
</body>
</html>
```

FILE: styles.css
```css
* {
    box-sizing: border-box;
}
html, body {
    margin: 0;
    padding: 0;
    background: #ffffff;
}
.page {
    width: 3508px;
    height: 2480px;
    border: 2px solid #2b3a55;
    padding: 102px 0 0 276px;
    overflow: hidden;
}

/* titulo cian */
.banner {
    width: 810px;
    height: 138px;
    background: #00ffff;
    display: flex;
    align-items: center;
    padding: 0 0 8px 44px;
}
.banner span {
    font-family: "Lato", sans-serif;
    font-weight: 900;
    font-style: italic;
    font-size: 106px;
    letter-spacing: 2px;
    line-height: 1;
    color: #2b3a55;
}

/* captura */
.shot {
    width: 2952px;
    margin-top: 169px;
    background: #1a78d6;
    font-family: "Open Sans", sans-serif;
}
.app {
    position: relative;
    height: 1582px;
    background: #4a4a4a;
    border-top: 2px solid #111;
    border-radius: 8px 8px 0 0;
    border-bottom: 1px solid #111;
    display: flex;
    flex-direction: column;
}

/* barra de titulo */
.titlebar {
    height: 52px;
    display: flex;
    align-items: center;
    padding: 0 0 6px 20px;
    position: relative;
    color: #d0d0d0;
    background: #484848;
}
.ai-logo {
    width: 46px;
    font-weight: 700;
    font-size: 33px;
    line-height: 1;
    color: #c8892a;
}
.menubar {
    display: flex;
    align-self: flex-start;
    height: 30px;
    margin-top: 9px;
    font-size: 17.400px;
}
.mb {
    padding: 0 13.500px;
    line-height: 28px;
    white-space: nowrap;
}
.mb-active {
    background: #333333;
    border-radius: 3px 3px 0 0;
}
.title-sep {
    width: 1px;
    height: 34px;
    margin-left: 7px;
    background: #666666;
}
.br-icon {
    width: 24px;
    height: 23px;
    margin-left: 25px;
    background: #8a8a8a;
    border-top: 3px solid #cfcfcf;
    color: #2e2e2e;
    font-size: 12px;
    line-height: 20px;
    text-align: center;
    border-radius: 2px;
}
.arrange-icon2 {
    margin-left: 35px;
}
.sep-right {
    margin-left: auto;
}
.workspace-name {
    margin-left: 18px;
    font-size: 17.200px;
    white-space: nowrap;
    color: #b9b9b9;
}
.workspace-caret {
    margin-left: 14px;
    margin-right: 22px;
}
.winctrl {
    display: flex;
    height: 29px;
    align-self: flex-start;
    margin-right: 11px;
    border: 1px solid #222;
    border-top: none;
    border-radius: 0 0 5px 5px;
    background: #3a3a3a;
}
.wc {
    display: flex;
    align-items: center;
    justify-content: center;
    border-right: 1px solid #1d1d1d;
}
.wc-min { width: 42px; }
.wc-max { width: 42px; }
.wc-close { width: 71px; border-right: none; }
.wc-min i {
    width: 16px;
    height: 5px;
    margin-top: 5px;
    background: #e4e4e4;
}
.wc-max i {
    width: 16px;
    height: 13px;
    border: 3px solid #e4e4e4;
    border-top-width: 4px;
}

/* barra de control */
.controlbar {
    height: 52px;
    margin: 0 7px;
    background: #4e4e4e;
    border-top: 1px solid #5c5c5c;
    border-bottom: 2px solid #333;
    display: flex;
    align-items: center;
    justify-content: space-between;
    padding: 0 24px 0 9px;
}
.grip {
    width: 2px;
    height: 30px;
    background: repeating-linear-gradient(#1a1a1a 0 1px, #777 1px 3px);
}

/* area de trabajo */
.workspace {
    flex: 1;
    display: flex;
    padding: 0 7px 5px 6px;
    min-height: 0;
}
.canvas {
    flex: 1;
    background: #111111;
}
.dock {
    width: 384px;
    margin-left: 2px;
    background: #333333;
    color: #8a8a8a;
    font-size: 15px;
    display: flex;
    flex-direction: column;
}
.dock-strip {
    height: 19px;
    background: #3a3a3a;
    display: flex;
    align-items: center;
    justify-content: flex-end;
    padding-right: 7px;
}

.tabs {
    display: grid;
    height: 26px;
    background: #383838;
}
.tabs-stroke { grid-template-columns: 72px 62px 61px 63px 66px 1fr; }
.tabs-layers { grid-template-columns: 67px 62px 64px 65px 66px 1fr; margin-top: 3px; height: 24px; }
.tabs-para { grid-template-columns: 62px 82px 95px 81px 1fr; margin-top: 4px; }
.tab {
    overflow: hidden;
    white-space: nowrap;
    line-height: 26px;
    padding-left: 11px;
    color: #8f9297;
    font-weight: 600;
    font-size: 14.500px;
    border-right: 1px solid #2c2c2c;
}
.tabs-layers .tab {
    line-height: 27px;
    padding-left: 10px;
}
.tabs-para .tab {
    line-height: 28px;
}
.tab-on {
    background: #4c4c4c;
    color: #d8d8d8;
    padding-left: 7px;
    border-right: none;
}
.updown {
    display: inline-block;
    width: 14px;
    font-size: 13px;
    font-weight: 400;
    color: #bbbbbb;
}
.tab-fill {
    display: flex;
    align-items: center;
    justify-content: flex-end;
    padding-right: 6px;
}

.body {
    background: #4c4c4c;
    overflow: hidden;
}
.body-stroke {
    height: 483px;
    padding: 5px 0 0 7px;
}
.body-layers {
    height: 644px;
    padding: 15px 9px 0;
}
.body-para {
    flex: 1;
    padding: 9px 0 0 0;
}

.row {
    display: flex;
    align-items: center;
    height: 40px;
}
.row label {
    width: 100px;
    margin-right: 7px;
    text-align: right;
    white-space: nowrap;
    flex-shrink: 0;
}
.mt5 { margin-top: 5px; }
.mt6 { margin-top: 6px; }
.mt7 { margin-top: 7px; }

.rule {
    height: 1px;
    background: #363636;
    border-bottom: 1px solid #565656;
    margin-right: 28px;
}
.rule-a { margin-top: 5px; }
.rule-b { margin-top: 7px; }
.rule-c { margin-top: 6px; }
.rule-p1 { margin: 9px 37px 0 8px; }
.rule-p2 { margin: 12px 37px 0 8px; }
.rule-p3 { margin: 11px 37px 0 8px; }

/* campos */
.field,
.pt {
    display: flex;
    height: 28px;
    background: #2f2f2f;
    padding: 1px;
    flex-shrink: 0;
}
.f129 { width: 129px; }
.f81 { width: 81px; }
.f158 { width: 158px; }
.ml17 { margin-left: 17px; }
.spin {
    width: 23px;
    display: flex;
    flex-direction: column;
    flex-shrink: 0;
    background: #5e5e5e;
}
.spin i {
    flex: 1;
    display: flex;
    align-items: center;
    justify-content: center;
    border-top: 1px solid #3a3a3a;
}
.spin i.up { border-top: none; }
.up::before,
.down::before {
    content: "";
    border-left: 5px solid transparent;
    border-right: 5px solid transparent;
}
.up::before { border-bottom: 6px solid #7e7e7e; }
.down::before { border-top: 6px solid #7e7e7e; }
.val {
    flex: 1;
    min-width: 0;
    background: #6e6e6e;
}
.val-txt {
    color: #343d4a;
    padding-left: 8px;
    line-height: 26px;
    font-size: 14.500px;
    white-space: nowrap;
}
.drop {
    width: 23px;
    flex-shrink: 0;
    background: #5a5a5a;
    display: flex;
    align-items: center;
    justify-content: center;
}
.drop i {
    display: flex;
}
.seg {
    display: flex;
    background: #333333;
    padding: 1px;
    gap: 1px;
    height: 28px;
    flex-shrink: 0;
}
.sb {
    width: 35px;
    background: #555555;
    display: flex;
    align-items: center;
    justify-content: center;
}
.sb-60 {
    width: 59px;
    background: #5a5a5a;
}
.limit-label {
    margin-left: 11px;
    width: 51px;
    white-space: nowrap;
}
.limit-box {
    width: 56px;
    height: 27px;
    background: #6e6e6e;
}
.limit-x {
    margin-left: 7px;
    font-size: 13px;
    color: #777777;
}
.side-ico {
    margin-left: 29px;
}
.flip-a { margin-left: 17px; }
.flip-b { margin-left: 19px; }

/* linea discontinua */
.row-dash {
    display: flex;
    align-items: center;
    height: 26px;
    margin: 13px 0 0 3px;
}
.check {
    width: 19px;
    height: 19px;
    background: #434343;
    border: 1px solid #363636;
    display: flex;
    align-items: center;
    justify-content: center;
    flex-shrink: 0;
}
.check i {
    width: 13px;
    height: 2px;
    background: #7a7a7a;
}
.dash-title {
    margin-left: 6px;
    color: #7d7d7d;
}
.seg-dash {
    margin-left: auto;
    margin-right: 31px;
}
.dash-boxes,
.dash-labels {
    display: grid;
    grid-template-columns: repeat(6, 53px);
    column-gap: 3px;
    margin-left: 3px;
}
.dash-boxes {
    margin-top: 14px;
}
.dash-boxes span {
    height: 27px;
    background: #6e6e6e;
    border-top: 1px solid #3c3c3c;
}
.dash-labels {
    height: 25px;
    line-height: 25px;
    text-align: center;
    font-size: 14px;
    color: #7b7b7b;
}

/* capas */
.layer-list {
    height: 598px;
    background: #505050;
    border: 1px solid #383838;
}
.layer-foot {
    height: 31px;
    display: flex;
    align-items: center;
    gap: 20px;
}
.layer-count {
    color: #d0d0d0;
    width: 135px;
    font-size: 14.500px;
}

/* parrafo */
.aligns {
    display: flex;
    height: 40px;
    padding-left: 5px;
}
.al {
    width: 49px;
    display: flex;
    align-items: center;
    justify-content: center;
}
.al-on {
    width: 37px;
    margin: 0 6px;
    background: #434343;
    border: 1px solid #363636;
}
.pt-row {
    display: flex;
    align-items: center;
    height: 28px;
    padding-left: 9px;
}
.pt-first { margin-top: 13px; }
.pt-second { margin-top: 12px; }
.pt-third { margin-top: 10px; }
.pt-ico {
    flex-shrink: 0;
    width: 26px;
    margin-right: 8px;
}
.pt {
    width: 120px;
}
.pt-ico-r {
    margin-left: 29px;
    margin-right: 8px;
}
.sep-row {
    display: flex;
    align-items: center;
    margin: 9px 0 0 9px;
    height: 20px;
}

/* herramientas */
.toolbox {
    position: absolute;
    left: 15px;
    top: 129px;
    width: 70px;
    height: 794px;
    background: #4c4c4c;
    border-radius: 4px 4px 0 0;
}
.tb-head {
    height: 22px;
    background: #3a3a3a;
    border-radius: 4px 4px 0 0;
}
.tb-grip {
    height: 25px;
    display: flex;
    align-items: center;
    padding-left: 40px;
}
.tb-grip span {
    width: 12px;
    height: 6px;
    background: repeating-linear-gradient(90deg, #1c1c1c 0 1px, #777 1px 3px);
}
.tool {
    position: relative;
    width: 41px;
    height: 36px;
    margin-left: 10px;
    display: flex;
    align-items: center;
    justify-content: center;
}
.tool svg {
    flex-shrink: 0;
    transform: scale(.9);
}
.tool-on {
    background: #3a3a3a;
}
.corner {
    position: absolute;
    right: 0;
    bottom: 2px;
    border-left: 4px solid transparent;
    border-bottom: 4px solid #c8c8c8;
}
.tool-sep {
    height: 1px;
    margin: 2px 0 3px 10px;
    background: #343434;
}
.tool-sep-5 { margin: 2px 0 2px 10px; }
.tool-sep-4 { margin: 2px 0 1px 10px; }
.colors {
    position: relative;
    width: 48px;
    height: 54px;
    margin: 0 0 0 9px;
    border: 2px solid #343434;
    color: #5a7391;
    font-size: 24px;
    font-weight: 700;
    padding-left: 20px;
    line-height: 36px;
}
.q-box {
    position: absolute;
    left: 26px;
    top: 22px;
    width: 40px;
    height: 44px;
    background: #4c4c4c;
    border: 2px solid #343434;
    font-size: 12px;
    line-height: 20px;
    padding-left: 5px;
}
.q-box span {
    display: block;
}
.q-low {
    color: #8a6c48;
}
.swap {
    margin: 12px 0 0 9px;
    height: 24px;
}
.modes {
    display: flex;
    margin: 6px 0 0 11px;
    height: 26px;
    background: #333;
    padding: 1px;
    gap: 1px;
    width: 58px;
}
.modes-b {
    margin-top: 12px;
}
.mode {
    width: 29px;
    background: #444444;
    display: flex;
    align-items: center;
    justify-content: center;
}
.mode-on i {
    width: 24px;
    height: 18px;
    background: #555;
    border: 3px solid #36908f;
}
.tb-last {
    margin: 15px 0 0 30px;
}

/* menu */
.menu {
    position: absolute;
    left: 66px;
    top: 39px;
    width: 719px;
    height: 896px;
    padding: 6px 4px 0 5px;
    background: #f1f1f1;
    color: #000000;
    font-size: 21.800px;
    box-shadow: 1px 1px 3px rgba(0, 0, 0, 0.6);
}
.mi {
    height: 36.800px;
    display: flex;
    align-items: center;
    justify-content: space-between;
    padding: 0 31px 0 53px;
    white-space: nowrap;
}
.mi kbd {
    font-family: inherit;
    font-size: inherit;
}
.mi-hot {
    background: #91c9f7;
}
.mi-sub {
    padding-right: 16px;
}
.off {
    color: #6d6d6d;
}
.msep {
    height: 11px;
    margin-left: 46px;
    display: flex;
    align-items: center;
}
.msep::before {
    content: "";
    flex: 1;
    height: 2px;
    background: #d7d7d7;
}

/* barra de tareas */
.taskbar {
    height: 78px;
    background: #231810;
    display: flex;
    align-items: center;
    position: relative;
}
.tk {
    width: 95.350px;
    height: 78px;
    flex-shrink: 0;
    display: flex;
    align-items: center;
    justify-content: center;
    position: relative;
}
.tk-sys {
    width: 92px;
}
.tk:nth-child(3) {
    margin-left: 5px;
}
.tk-on::after {
    content: "";
    position: absolute;
    left: 8px;
    right: 8px;
    bottom: 0;
    height: 5px;
    background: #76b9ed;
}
.tk-current {
    background: #4f453f;
}
.tk-current::after {
    left: 0;
    right: 0;
}
.tk-stack::after {
    right: 0;
    background: linear-gradient(90deg, #76b9ed 80%, #5791c4 80%);
}
.cmd-txt {
    font-family: "Liberation Mono", monospace;
    font-size: 11px;
    fill: #9a9a9a;
}
.box-txt {
    font-family: "Open Sans", sans-serif;
    font-size: 24px;
    font-weight: 600;
    text-anchor: middle;
}
.id-txt { fill: #dd3a96; }
.ps-txt { fill: #6eb5ea; }
.ai-txt { fill: #f59c1d; }

.tray {
    margin-left: auto;
    display: flex;
    align-items: center;
    height: 78px;
    color: #ffffff;
    flex-shrink: 0;
}
.ty {
    width: 40px;
    display: flex;
    align-items: center;
    justify-content: center;
    position: relative;
}
.ty-caret { margin-left: 34px; }
.ty-plug { margin-left: 6px; }
.ty-cloud { margin-left: 8px; }
.ty-wifi { margin-left: 7px; }
.ty-speaker { margin-left: 3px; }
.ty-lang {
    width: 52px;
    margin-left: 10px;
    font-size: 22px;
    text-align: center;
}
.ty-clock {
    width: 124px;
    margin-left: 19px;
    display: flex;
    flex-direction: column;
    align-items: center;
    gap: 9px;
    font-size: 21.500px;
    line-height: 27px;
    white-space: nowrap;
}
.ty-notif {
    margin-left: 27px;
}
.notif-badge {
    position: absolute;
    left: 19px;
    top: 15px;
    width: 30px;
    height: 34px;
    border-radius: 50%;
    background: #3a3a3a;
    border: 2px solid #555;
    color: #fff;
    font-size: 20px;
    line-height: 30px;
    text-align: center;
}
.ty-end {
    width: 1px;
    height: 78px;
    margin: 0 7px 0 35px;
    background: #4d4640;
}
```
